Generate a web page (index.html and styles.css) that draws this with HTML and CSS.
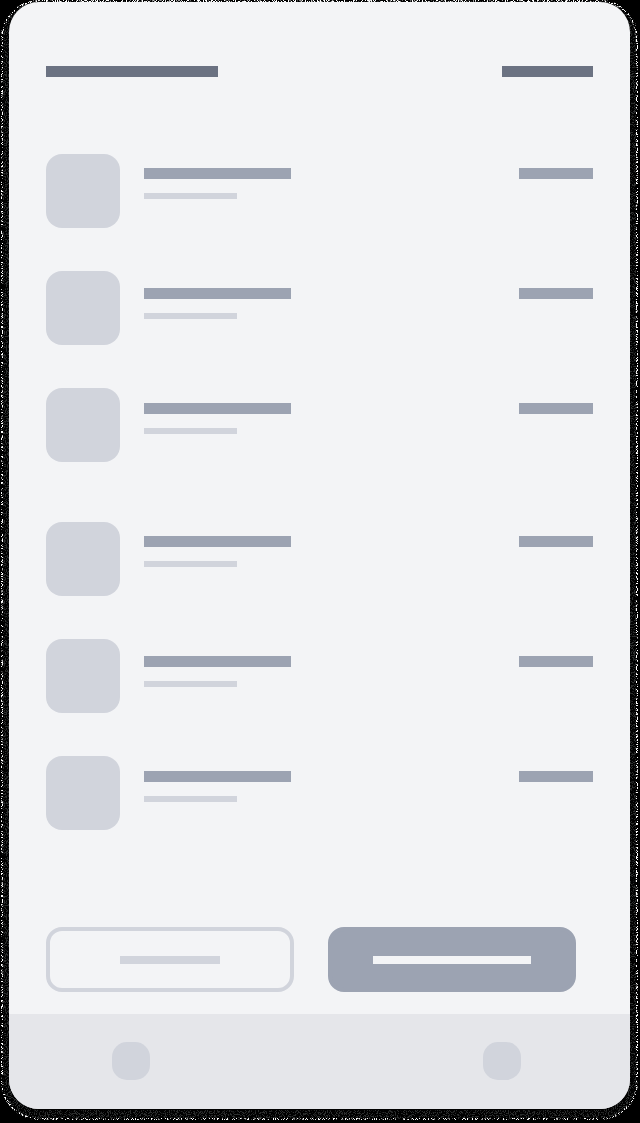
FILE: index.html
```html
<!DOCTYPE html>
<html lang="en">
<head>
<meta charset="utf-8">
<meta name="viewport" content="width=device-width, initial-scale=1">
<title>List</title>
<link rel="stylesheet" href="styles.css">
</head>
<body>
<svg class="filters" aria-hidden="true">
  <filter id="grain" x="0" y="0" width="100%" height="100%" color-interpolation-filters="sRGB">
    <feTurbulence type="fractalNoise" baseFrequency="0.9" numOctaves="2" seed="4"/>
    <feColorMatrix values="0 0 0 0 1  0 0 0 0 1  0 0 0 0 1  14 0 0 0 -7.3"/>
    <feComposite in="SourceGraphic" operator="in"/>
  </filter>
</svg>
<div class="frame">
  <div class="phone">
    <header class="header">
      <span class="bar bar-title"></span>
      <span class="bar bar-action"></span>
    </header>
    <main class="content">
      <ul class="list">
        <li class="row row-a"><span class="thumb"></span><span class="lines"><span class="bar bar-name"></span><span class="bar bar-sub"></span></span><span class="bar bar-value"></span></li>
        <li class="row row-b"><span class="thumb"></span><span class="lines"><span class="bar bar-name"></span><span class="bar bar-sub"></span></span><span class="bar bar-value"></span></li>
        <li class="row row-c"><span class="thumb"></span><span class="lines"><span class="bar bar-name"></span><span class="bar bar-sub"></span></span><span class="bar bar-value"></span></li>
      </ul>
      <ul class="list">
        <li class="row row-a"><span class="thumb"></span><span class="lines"><span class="bar bar-name"></span><span class="bar bar-sub"></span></span><span class="bar bar-value"></span></li>
        <li class="row row-b"><span class="thumb"></span><span class="lines"><span class="bar bar-name"></span><span class="bar bar-sub"></span></span><span class="bar bar-value"></span></li>
        <li class="row row-c"><span class="thumb"></span><span class="lines"><span class="bar bar-name"></span><span class="bar bar-sub"></span></span><span class="bar bar-value"></span></li>
      </ul>
    </main>
    <div class="actions">
      <button class="button button-outline" type="button" aria-label="Secondary action"><span class="bar bar-secondary"></span></button>
      <button class="button button-solid" type="button" aria-label="Primary action"><span class="bar bar-primary"></span></button>
    </div>
    <nav class="tabs">
      <button class="tab" type="button" aria-label="First tab"></button>
      <button class="tab" type="button" aria-label="Second tab"></button>
    </nav>
  </div>
</div>
</body>
</html>
```

FILE: styles.css
```css
* { box-sizing: border-box; }

body {
  margin: 0;
  background: #000;
  font-family: "Liberation Sans", sans-serif;
}

.filters {
  position: absolute;
  width: 0;
  height: 0;
}

.frame {
  position: relative;
  padding: 2px 10px 14px 9px;
}

/* grainy shadow round the card */
.frame::before,
.frame::after {
  content: "";
  position: absolute;
  filter: url(#grain);
  pointer-events: none;
}

.frame::before {
  inset: 1px 4px 5px 3px;
  border: 8px solid #2c2e2e;
  border-radius: 36px;
}

.frame::after {
  inset: 0 2px 3px 1px;
  border: 2px solid #fff;
  border-radius: 38px;
}

.phone {
  position: relative;
  z-index: 1;
  overflow: hidden;
  border-radius: 30px;
  background: #f3f4f6;
}

.bar {
  display: block;
  height: 11px;
  background: #9ca3b2;
}

.header {
  display: flex;
  justify-content: space-between;
  padding: 64px 37px 0;
}

.bar-title { width: 172px; background: #6b7282; }
.bar-action { width: 91px; background: #6b7282; }

.content {
  display: flex;
  flex-direction: column;
  gap: 60px;
  padding: 77px 37px 97px;
}

.list {
  display: flex;
  flex-direction: column;
  gap: 43px;
  margin: 0;
  padding: 0;
  list-style: none;
}

.row {
  display: flex;
  height: 74px;
}

.row-a { --text-top: 14px; }
.row-b { --text-top: 17px; }
.row-c { --text-top: 15px; }

.thumb {
  width: 74px;
  height: 74px;
  border-radius: 16px;
  background: #d1d4dc;
}

.lines {
  display: flex;
  flex: 1;
  flex-direction: column;
  gap: 14px;
  margin-left: 24px;
  padding-top: var(--text-top);
}

.bar-name { width: 147px; }
.bar-sub { width: 93px; height: 6px; background: #d1d4dc; }
.bar-value { width: 74px; margin-top: var(--text-top); }

.actions {
  display: flex;
  gap: 34px;
  padding: 0 54px 22px 37px;
}

.button {
  display: flex;
  flex: 1;
  align-items: center;
  justify-content: center;
  height: 65px;
  padding: 0;
  border: 4px solid #d1d4dc;
  border-radius: 16px;
  background: transparent;
}

.button-solid {
  border-color: #9ca3b2;
  background: #9ca3b2;
}

.bar-secondary { width: 100px; height: 8px; background: #d1d4dc; }
.bar-primary { width: 158px; height: 8px; background: #f3f4f6; }

.tabs {
  display: flex;
  justify-content: space-between;
  padding: 28px 109px 29px 103px;
  background: #e5e6ea;
}

.tab {
  width: 38px;
  height: 38px;
  padding: 0;
  border: 0;
  border-radius: 15px;
  background: #d1d4dc;
}
```
